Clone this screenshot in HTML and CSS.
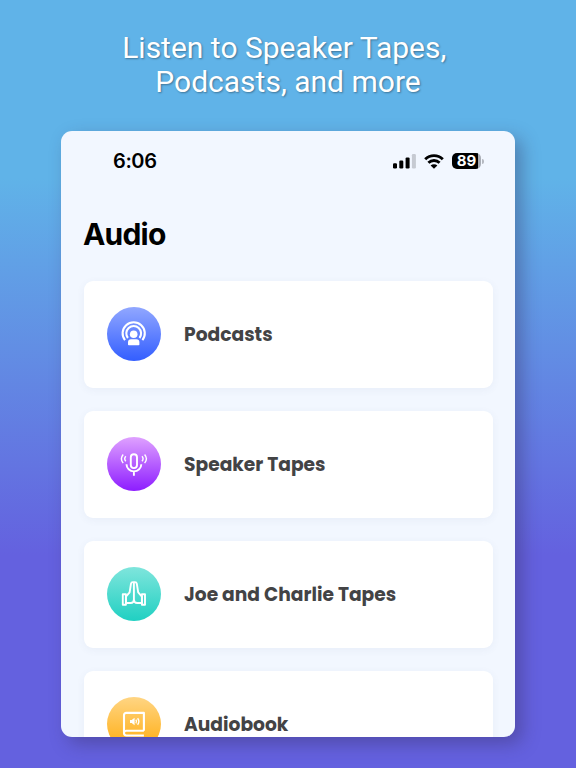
FILE: index.html
```html
<!DOCTYPE html>
<html lang="en">
<head>
    <meta charset="UTF-8">
    <meta name="viewport" content="width=device-width, initial-scale=1.0">
    <title>Audio</title>
    <link rel="stylesheet" href="styles.css">
</head>
<body>
    <h1 class="headline">Listen to Speaker Tapes,&nbsp;<br>Podcasts, and more</h1>

    <main class="phone">
        <div class="status-bar">
            <span class="time">6:06</span>
            <div class="status-icons">
                <svg class="signal" width="23" height="15" viewBox="0 0 23 15">
                    <rect x="0" y="9.3" width="4" height="5.2" rx="1.2"/>
                    <rect x="6.3" y="6.6" width="4" height="7.9" rx="1.2"/>
                    <rect x="12.6" y="3.4" width="4" height="11.1" rx="1.2"/>
                    <rect class="off" x="18.9" y="0" width="4" height="14.5" rx="1.2"/>
                </svg>
                <svg class="wifi" width="20" height="15" viewBox="0 0 20 15">
                    <path d="M1.2 5.2C6.2.4 13.8.4 18.8 5.2M4.4 8.7c3.2-3 8-3 11.2 0"/>
                    <path class="dot" d="M10 14.8 6.6 11.4c1.9-1.7 4.9-1.7 6.8 0z"/>
                </svg>
                <div class="battery"><span>89</span></div>
                <i class="battery-tip"></i>
            </div>
        </div>

        <h2 class="title">Audio</h2>

        <ul class="list">
            <li class="card">
                <div class="icon blue">
                    <svg width="26" height="26" viewBox="0 0 26 26">
                        <path class="thick" d="M4 19.2a11.1 11.1 0 1 1 17.4 0M6.9 17a7.4 7.4 0 1 1 11.6 0"/>
                        <circle class="fill" cx="12.7" cy="13.2" r="3.8"/>
                        <path class="fill" d="M7 23.400v-2.200a3 3 0 0 1 3-3h5.400a3 3 0 0 1 3 3v2.200a.8.8 0 0 1-.8.8H7.800a.8.8 0 0 1-.8-.8z"/>
                    </svg>
                </div>
                <span class="label">Podcasts</span>
            </li>
            <li class="card">
                <div class="icon purple">
                    <svg width="28" height="26" viewBox="0 0 28 26">
                        <rect x="10.8" y="3.2" width="6.2" height="13.9" rx="3.1"/>
                        <path d="M6.500 13.200a7.400 7.200 0 0 0 14.800 0M13.900 20.400v4.300"/>
                        <path class="thin" d="M3.2 3.5c-2.200 2.600-2.200 6 0 8.600M5.800 5.300c-1.300 1.500-1.300 3.500 0 5M24.600 3.500c2.200 2.600 2.200 6 0 8.600M22 5.300c1.300 1.500 1.300 3.500 0 5"/>
                    </svg>
                </div>
                <span class="label">Speaker Tapes</span>
            </li>
            <li class="card">
                <div class="icon teal">
                    <svg width="26" height="26" viewBox="0 0 26 26">
                        <path d="M12.9 1.3v17.200M12.9 1.100h-1.100c-1 0-1.600.6-1.800 1.600L8.600 11.400 4.900 15.700v6.300h4.700c2 0 3.300-1.400 3.300-3.500 0 2.100 1.300 3.500 3.300 3.500h4.700v-6.300l-3.700-4.300-1.400-8.700c-.2-1-.8-1.600-1.800-1.600z"/>
                        <path d="M1.8 13.200h3.100v10.600H1.800zM20.900 13.200h3.100v10.600h-3.100z"/>
                    </svg>
                </div>
                <span class="label">Joe and Charlie Tapes</span>
            </li>
            <li class="card">
                <div class="icon yellow">
                    <svg width="26" height="26" viewBox="0 0 26 26">
                        <path class="thick" d="M22.900 19.700V1.900H5.200a2.200 2.200 0 0 0-2.200 2.200v18M22.900 19.700H5.400a2.400 2.400 0 0 0 0 4.800h17.500"/>
                        <path class="fill" d="M9 9.100h1.700l2.900-2.400v7.600l-2.900-2.400H9z"/>
                        <path class="thin" d="M14.900 8.700c.8 1.100.8 2.500 0 3.600M16.600 7.300c1.500 1.900 1.500 4.500 0 6.400"/>
                    </svg>
                </div>
                <span class="label">Audiobook</span>
            </li>
        </ul>
    </main>
</body>
</html>
```

FILE: styles.css
```css
* {
    margin: 0;
    padding: 0;
    box-sizing: border-box;
}

body {
    height: 768px;
    overflow: hidden;
    padding-top: 31px;
    background: linear-gradient(180deg, #60b3e8 178px, #6461df 555px);
    font-family: Inter, "Liberation Sans", sans-serif;
}

.headline {
    font-family: Roboto, sans-serif;
    font-size: 30px;
    font-weight: 400;
    line-height: 34px;
    text-align: center;
    color: #fff;
    text-shadow: 1px 1px 2px rgba(0, 0, 0, 0.35);
}

/* Device screen */
.phone {
    width: 454px;
    height: 606px;
    margin: 32px 0 0 61px;
    padding: 0 22px 0 23px;
    overflow: hidden;
    background-color: #f2f7ff;
    border-radius: 11px;
    box-shadow: 7px 7px 18px rgba(50, 40, 80, 0.36);
}

.status-bar {
    display: flex;
    justify-content: space-between;
    align-items: center;
    height: 60px;
    padding: 0 9px 0 29px;
}

.time {
    font-size: 20px;
    font-weight: 600;
    letter-spacing: -0.4px;
}

.status-icons {
    display: flex;
    align-items: center;
}

.signal {
    margin-right: 8px;
}

.signal .off {
    fill: #c6cad2;
}

.wifi {
    margin-right: 8px;
    fill: none;
    stroke: #000;
    stroke-width: 2.9;
}

.wifi .dot {
    fill: #000;
    stroke: none;
}

.battery {
    width: 29px;
    height: 16px;
    border-radius: 5px;
    background: linear-gradient(90deg, #000 26px, #a9adb5 26px);
    color: #fff;
    font-size: 15px;
    font-weight: 700;
    line-height: 16px;
    text-align: center;
}

.battery-tip {
    width: 2px;
    height: 5px;
    margin-left: 1px;
    border-radius: 0 2px 2px 0;
    background-color: #b5b9c1;
}

.title {
    margin: 23px 0 0 -1px;
    font-size: 30px;
    font-weight: 700;
    line-height: 40px;
    letter-spacing: -0.8px;
}

/* Categories */
.list {
    display: grid;
    gap: 23px;
    margin-top: 27px;
    list-style: none;
}

.card {
    display: flex;
    align-items: center;
    gap: 23px;
    height: 107px;
    padding: 0 23px;
    background-color: #fff;
    border-radius: 9px;
    box-shadow: 0 2px 9px rgba(60, 90, 130, 0.06);
}

.icon {
    display: flex;
    justify-content: center;
    align-items: center;
    width: 54px;
    height: 54px;
    margin-bottom: 1px;
    border-radius: 50%;
}

.icon svg {
    fill: none;
    stroke: #fff;
    stroke-width: 1.9;
    stroke-linejoin: round;
}

.icon .thick {
    stroke-width: 2.1;
}

.icon .thin {
    stroke-width: 1.4;
}

.icon .fill {
    fill: #fff;
    stroke: none;
}

.blue {
    background: linear-gradient(#91a7ff, #335eff);
}

.purple {
    background: linear-gradient(#dfa1ff, #8d1dff);
}

.teal {
    background: linear-gradient(#7fe5dc, #20d0c2);
}

.yellow {
    background: linear-gradient(#ffd583, #ffab0c);
}

.label {
    font-family: Poppins, Inter, sans-serif;
    font-size: 18.67px;
    font-weight: 700;
    color: #434345;
}
```
